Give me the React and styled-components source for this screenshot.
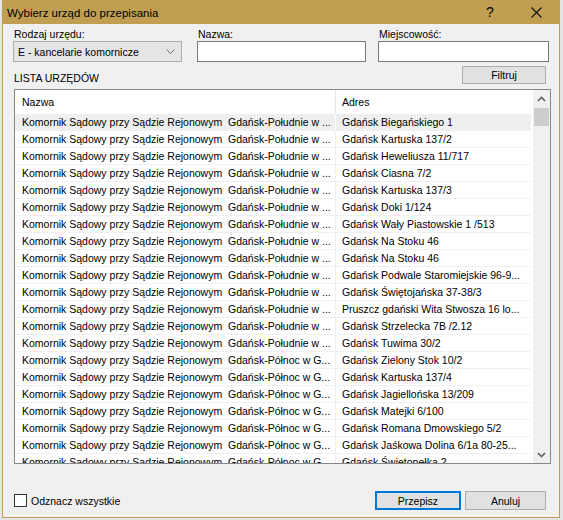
import React from "react";
import styled, { createGlobalStyle } from "styled-components";

const GlobalStyle = createGlobalStyle`
  html, body {
    margin: 0;
    padding: 0;
    background: #e4e4e4;
  }
  body {
    font-family: "Liberation Sans", Arial, sans-serif;
    font-size: 10.5px;
    color: #000;
  }
`;

const Page = styled.div`
  width: 563px;
  height: 520px;
  overflow: hidden;
`;

const Window = styled.div`
  margin-left: 2px;
  width: 558px;
  height: 518px;
  box-sizing: border-box;
  border: 1px solid #c09e52;
  border-top: none;
  background: #f0f0f0;
  display: flex;
  flex-direction: column;
`;

const TitleBar = styled.div`
  height: 24px;
  background: #c09e52;
  display: flex;
  align-items: center;
  padding-left: 4px;
  font-size: 11.5px;
  color: #000;
`;

const Title = styled.div`
  flex: 1;
  padding-top: 1px;
`;

const TitleButton = styled.div`
  width: ${(p) => p.$w}px;
  height: 24px;
  display: flex;
  align-items: center;
  justify-content: center;
  font-size: 14px;
`;

const Body = styled.div`
  flex: 1;
  display: flex;
  flex-direction: column;
  padding: 0 13px 0 10px;
`;

const Fields = styled.div`
  display: grid;
  grid-template-columns: 169px 169px 168px;
  column-gap: 15px;
  margin-top: 4px;
  & > div:nth-child(3) {
    margin-left: -3px;
  }
`;

const Field = styled.div`
  display: flex;
  flex-direction: column;
`;

const Label = styled.div`
  height: 13px;
  line-height: 13px;
  padding-left: 1px;
`;

const Select = styled.div`
  height: 21px;
  box-sizing: border-box;
  border: 1px solid #adadad;
  background: #e5e5e5;
  display: flex;
  align-items: center;
  padding: 0 6px 0 4px;
  justify-content: space-between;
  font-size: 10.5px;
`;

const Input = styled.div`
  height: 21px;
  box-sizing: border-box;
  border: 1px solid #7a7a7a;
  background: #fff;
`;

const ListBar = styled.div`
  height: 27px;
  display: flex;
  justify-content: space-between;
  align-items: flex-start;
`;

const ListTitle = styled.div`
  align-self: flex-end;
  padding-left: 1px;
  padding-bottom: 4px;
  line-height: 13px;
`;

const Button = styled.div`
  width: ${(p) => p.$w}px;
  height: ${(p) => p.$h || 19}px;
  box-sizing: border-box;
  margin-top: ${(p) => p.$mt || 0}px;
  border: ${(p) => (p.$primary ? "2px solid #0078d7" : "1px solid #adadad")};
  background: #e1e1e1;
  display: flex;
  align-items: center;
  justify-content: center;
  font-size: 10.5px;
`;

const ListBox = styled.div`
  margin-left: 1px;
  margin-right: -5px;
  height: 375px;
  box-sizing: border-box;
  border: 1px solid #828790;
  background: #fff;
  display: flex;
  overflow: hidden;
`;

const Rows = styled.div`
  flex: 1;
  display: flex;
  flex-direction: column;
  overflow: hidden;
`;

const HeaderRow = styled.div`
  height: 24px;
  flex-shrink: 0;
  display: flex;
`;

const HeaderCell = styled.div`
  width: ${(p) => (p.$w ? p.$w + "px" : "auto")};
  flex: ${(p) => (p.$w ? "none" : 1)};
  box-sizing: border-box;
  border-right: ${(p) => (p.$w ? "1px solid #e5e5e5" : "none")};
  padding-left: ${(p) => p.$pl}px;
  display: flex;
  align-items: center;
`;

const Row = styled.div`
  height: 17px;
  flex-shrink: 0;
  display: flex;
  margin-right: 2px;
`;

const Cell = styled.div`
  width: ${(p) => (p.$w ? p.$w + "px" : "auto")};
  flex: ${(p) => (p.$w ? "none" : 1)};
  box-sizing: border-box;
  height: 17px;
  line-height: 16px;
  border-bottom: 1px solid #f0f0f0;
  border-right: ${(p) =>
    p.$w ? `1px solid ${p.$sel ? "#fff" : "#f0f0f0"}` : "none"};
  background: ${(p) => (p.$sel ? "#efefef" : "#fff")};
  padding-left: ${(p) => p.$pl}px;
  white-space: pre;
  overflow: hidden;
`;

const ScrollBar = styled.div`
  width: 17px;
  flex-shrink: 0;
  background: #f0f0f0;
  display: flex;
  flex-direction: column;
  align-items: center;
`;

const Arrow = styled.div`
  height: 17px;
  width: 17px;
  display: flex;
  align-items: center;
  justify-content: center;
`;

const Thumb = styled.div`
  width: 15px;
  height: 18px;
  background: #cdcdcd;
  margin-top: 1px;
`;

const Spacer = styled.div`
  flex: 1;
`;

const Footer = styled.div`
  display: flex;
  justify-content: space-between;
  align-items: center;
  margin-top: 27px;
`;

const CheckLabel = styled.label`
  display: flex;
  align-items: center;
  gap: 4px;
  padding-left: 1px;
  font-size: 10.5px;
`;

const Box = styled.span`
  width: 13px;
  height: 13px;
  box-sizing: border-box;
  border: 1px solid #333;
  background: #fff;
`;

const Buttons = styled.div`
  display: flex;
  gap: 4px;
`;

const NAME = "Komornik Sądowy przy Sądzie Rejonowym  ";
const SOUTH = "Gdańsk-Południe w ...";
const NORTH = "Gdańsk-Północ w G...";

const rows = [
  [SOUTH, "Gdańsk Biegańskiego 1"],
  [SOUTH, "Gdańsk Kartuska 137/2"],
  [SOUTH, "Gdańsk Heweliusza 11/717"],
  [SOUTH, "Gdańsk Ciasna 7/2"],
  [SOUTH, "Gdańsk Kartuska 137/3"],
  [SOUTH, "Gdańsk Doki 1/124"],
  [SOUTH, "Gdańsk Wały Piastowskie 1 /513"],
  [SOUTH, "Gdańsk Na Stoku 46"],
  [SOUTH, "Gdańsk Na Stoku 46"],
  [SOUTH, "Gdańsk Podwale Staromiejskie 96-9..."],
  [SOUTH, "Gdańsk Świętojańska 37-38/3"],
  [SOUTH, "Pruszcz gdański Wita Stwosza 16 lo..."],
  [SOUTH, "Gdańsk Strzelecka 7B /2.12"],
  [SOUTH, "Gdańsk Tuwima 30/2"],
  [NORTH, "Gdańsk Zielony Stok 10/2"],
  [NORTH, "Gdańsk Kartuska 137/4"],
  [NORTH, "Gdańsk Jagiellońska 13/209"],
  [NORTH, "Gdańsk Matejki 6/100"],
  [NORTH, "Gdańsk Romana Dmowskiego 5/2"],
  [NORTH, "Gdańsk Jaśkowa Dolina 6/1a 80-25..."],
  [NORTH, "Gdańsk Świętopełka 2"],
];

const Chevron = ({ up, color = "#606060" }) => (
  <svg width="9" height="6" viewBox="0 0 9 6">
    <path
      d={up ? "M1 5 L4.5 1.5 L8 5" : "M1 1 L4.5 4.5 L8 1"}
      fill="none"
      stroke={color}
      strokeWidth="1.6"
    />
  </svg>
);

export default function App() {
  return (
    <Page>
      <GlobalStyle />
      <Window>
        <TitleBar>
          <Title>Wybierz urząd do przepisania</Title>
          <TitleButton $w={46}>?</TitleButton>
          <TitleButton $w={46}>
            <svg width="11" height="11" viewBox="0 0 11 11">
              <path d="M0.5 0.5 L10.5 10.5 M10.5 0.5 L0.5 10.5" stroke="#111" strokeWidth="1.1" />
            </svg>
          </TitleButton>
        </TitleBar>
        <Body>
          <Fields>
            <Field>
              <Label>Rodzaj urzędu:</Label>
              <Select>
                <span>E - kancelarie komornicze</span>
                <svg width="9" height="5" viewBox="0 0 9 5">
                  <path d="M0.5 0.5 L4.5 4.5 L8.5 0.5" fill="none" stroke="#707070" strokeWidth="1" />
                </svg>
              </Select>
            </Field>
            <Field>
              <Label>Nazwa:</Label>
              <Input />
            </Field>
            <Field>
              <Label>Miejscowość:</Label>
              <Input />
            </Field>
          </Fields>
          <ListBar>
            <ListTitle>LISTA URZĘDÓW</ListTitle>
            <Button $w={84} $h={18} $mt={4}>Filtruj</Button>
          </ListBar>
          <ListBox>
            <Rows>
              <HeaderRow>
                <HeaderCell $w={321} $pl={7}>Nazwa</HeaderCell>
                <HeaderCell $pl={6}>Adres</HeaderCell>
              </HeaderRow>
              {rows.map(([city, addr], i) => (
                <Row key={i}>
                  <Cell $w={321} $pl={7} $sel={i === 0}>
                    {NAME + city}
                  </Cell>
                  <Cell $pl={6} $sel={i === 0}>
                    {addr}
                  </Cell>
                </Row>
              ))}
            </Rows>
            <ScrollBar>
              <Arrow>
                <Chevron up />
              </Arrow>
              <Thumb />
              <Spacer />
              <Arrow>
                <Chevron />
              </Arrow>
            </ScrollBar>
          </ListBox>
          <Footer>
            <CheckLabel>
              <Box />
              Odznacz wszystkie
            </CheckLabel>
            <Buttons>
              <Button $w={86} $primary>Przepisz</Button>
              <Button $w={81}>Anuluj</Button>
            </Buttons>
          </Footer>
        </Body>
      </Window>
    </Page>
  );
}
